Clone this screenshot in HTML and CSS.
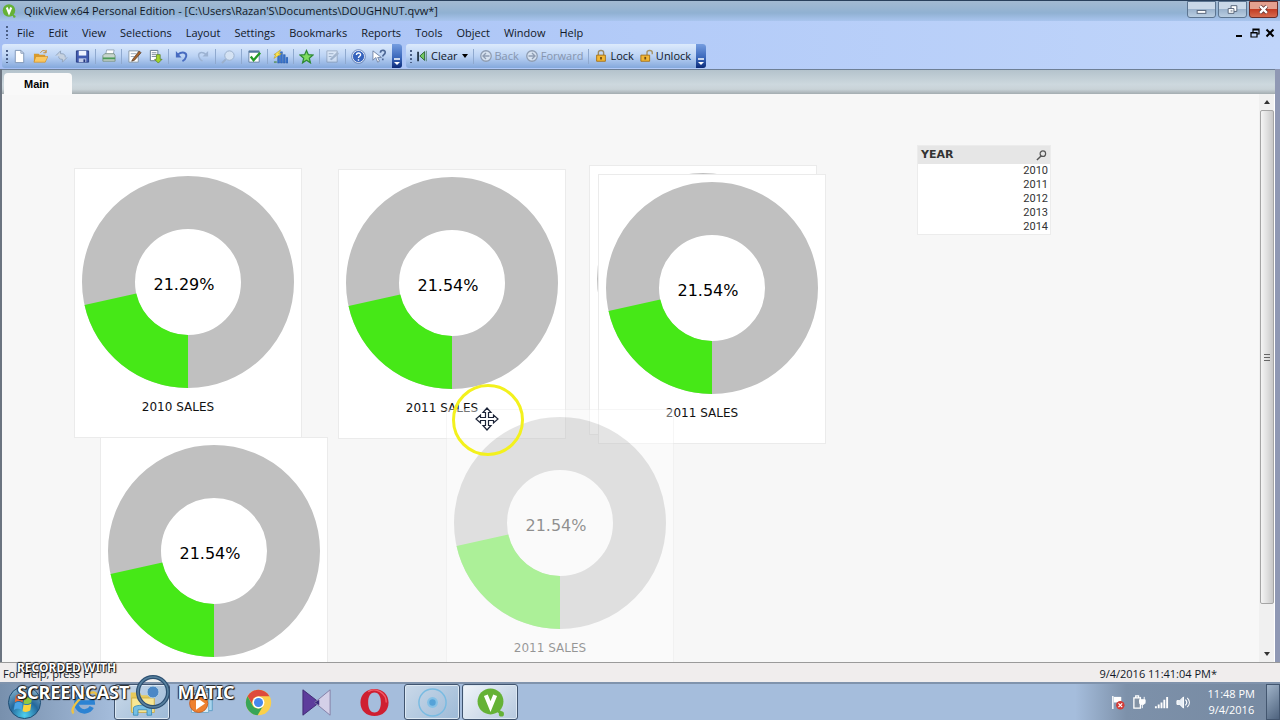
FILE: index.html
```html
<!DOCTYPE html>
<html lang="en">
<head>
<meta charset="utf-8">
<title>QlikView x64 Personal Edition</title>
<link rel="stylesheet" href="styles.css">
</head>
<body>
<svg class="defs" aria-hidden="true">
  <defs>
    <symbol id="donut" viewBox="0 0 212 212">
      <circle cx="106" cy="106" r="79.500" fill="none" stroke="#c0c0c0" stroke-width="53"/>
      <path d="M106 212A106 106 0 0 1 2.500 129L54.300 117.500A53 53 0 0 0 106 159Z" fill="#46e817"/>
    </symbol>
    <symbol id="edit" viewBox="0 0 16 16"><path d="M2 2h10v12H2z" fill="#fff" stroke="#8899a8"/><path d="M4 5h6M4 8h4" stroke="#9ab"/><path d="M6 11l7-9 2 2-7 8-3 1z" fill="#a8642c" stroke="#473322" stroke-width=".7"/></symbol>
    <symbol id="qlik" viewBox="0 0 28 28"><circle cx="14" cy="13" r="12.500" fill="#65b236"/><circle cx="24.500" cy="25" r="2.500" fill="#65b236"/><path d="M19 20l5 4" stroke="#65b236" stroke-width="3"/><path d="M9.500 7l4.500 11 4.500-11" fill="none" stroke="#fff" stroke-width="4"/></symbol>
  </defs>
</svg>

<header class="titlebar">
  <svg class="app-icon" viewBox="0 0 28 28"><use href="#qlik"/></svg>
  <h1 class="title">QlikView x64 Personal Edition - [C:\Users\Razan'S\Documents\DOUGHNUT.qvw*]</h1>
  <div class="window-buttons">
    <button class="wb" aria-label="Minimize"><svg viewBox="0 0 28 15"><rect x="9.500" y="8.500" width="9" height="3" fill="#fff" stroke="#56657a"/></svg></button>
    <button class="wb" aria-label="Restore"><svg viewBox="0 0 28 15"><path d="M12.500 3.500h6v6h-6z" fill="#fff" stroke="#56657a"/><path d="M9.500 6.500h6v5h-6z" fill="#fff" stroke="#56657a"/><path d="M12 9h2" stroke="#56657a"/></svg></button>
    <button class="wb wb-close" aria-label="Close"><svg viewBox="0 0 28 15"><path d="M10.500 4l7 7M17.500 4l-7 7" stroke="#5b3030" stroke-width="4"/><path d="M10.500 4l7 7M17.500 4l-7 7" stroke="#fff" stroke-width="2.400"/></svg></button>
  </div>
</header>

<nav class="menubar">
  <span class="grip"></span>
  <div class="menus">
    <button>File</button><button>Edit</button><button>View</button><button>Selections</button><button>Layout</button><button>Settings</button><button>Bookmarks</button><button>Reports</button><button>Tools</button><button>Object</button><button>Window</button><button>Help</button>
  </div>
  <div class="doc-buttons">
    <button aria-label="Minimize document"><svg viewBox="0 0 10 10"><path d="M1 8h6" stroke="#000" stroke-width="2"/></svg></button>
    <button aria-label="Restore document"><svg viewBox="0 0 10 10"><path d="M3 4V1h6v5H7M3 2h6M1 4.500h6V9H1zM1 5h6" fill="none" stroke="#000" stroke-width="1.200"/></svg></button>
    <button aria-label="Close document"><svg viewBox="0 0 10 10"><path d="M1.500 1.500l7 7M8.500 1.500l-7 7" stroke="#000" stroke-width="2"/></svg></button>
  </div>
</nav>

<div class="toolbars">
  <div class="toolbar">
    <span class="grip"></span>
    <button class="tool" aria-label="New"><svg viewBox="0 0 16 16"><path d="M3.500 1.500h6l3 3v10h-9z" fill="#fff" stroke="#7f96b6"/><path d="M9.500 1.500v3h3" fill="none" stroke="#7f96b6"/></svg></button>
    <button class="tool" aria-label="Open"><svg viewBox="0 0 16 16"><path d="M1 5h5l1 1h6v8H1z" fill="#d89a2c"/><path d="M3 8h13l-3 6H1z" fill="#fbc860" stroke="#c78724" stroke-width=".6"/><path d="M8 4c2-3 4-3 6-1M14 1v3h-3" fill="none" stroke="#c78724"/></svg></button>
    <button class="tool" aria-label="Refresh"><svg viewBox="0 0 16 16"><path d="M2 7l5-5v3c4 0 5 1 5 4M14 9l-5 5v-3c-3 0-4-1-4-3" fill="#c7d2e0" stroke="#8fa2bb"/></svg></button>
    <button class="tool" aria-label="Save"><svg viewBox="0 0 16 16"><path d="M1.500 2h13v12h-13z" fill="#415bb0" stroke="#293c82"/><path d="M4 2h8v5H4z" fill="#eef3ff"/><path d="M4 10h8v4H4z" fill="#c3cdea"/><path d="M9 11h2v3H9z" fill="#26397f"/></svg></button>
    <span class="sep"></span>
    <button class="tool" aria-label="Print"><svg viewBox="0 0 16 16"><path d="M5 6l1-5h8l-1 5z" fill="#fff" stroke="#9ab"/><path d="M2 7l2-2h10l1 2v6H2z" fill="#c7d5cd" stroke="#7c9486"/><path d="M2 10h13" stroke="#4c9a58" stroke-width="2"/></svg></button>
    <span class="sep"></span>
    <button class="tool" aria-label="Edit script"><svg viewBox="0 0 16 16"><use href="#edit"/></svg></button>
    <button class="tool" aria-label="Reload"><svg viewBox="0 0 16 16"><path d="M2.500 1.500h8v11h-8z" fill="#fff" stroke="#60778c"/><path d="M4 4h5M4 6h5M4 8h5" stroke="#789"/><path d="M9 6h4v5h2l-4 4-4-4h2z" fill="#a3d52d" stroke="#4d7716" stroke-width=".7"/></svg></button>
    <span class="sep"></span>
    <button class="tool" aria-label="Undo"><svg viewBox="0 0 16 16"><path d="M4 6c5-4 10-2 9 2-.5 2-2 4-4 5" fill="none" stroke="#476bc0" stroke-width="2"/><path d="M2 2v7h6z" fill="#476bc0"/></svg></button>
    <button class="tool" aria-label="Redo"><svg viewBox="0 0 16 16"><path d="M12 6C7 2 3 4 4 8c.5 2 2 4 4 5" fill="none" stroke="#9cb2d2" stroke-width="1.500"/><path d="M14 2v6H8z" fill="#9cb2d2"/></svg></button>
    <span class="sep"></span>
    <button class="tool" aria-label="Search"><svg viewBox="0 0 16 16"><circle cx="9" cy="7" r="5" fill="#d4e2f3" stroke="#9aafcb"/><path d="M5 11l-4 4" stroke="#9aafcb" stroke-width="2"/></svg></button>
    <span class="sep"></span>
    <button class="tool" aria-label="Current selections"><svg viewBox="0 0 16 16"><path d="M2 2h11v12H2z" fill="#fff" stroke="#6682a4"/><path d="M2 3h11" stroke="#54789f" stroke-width="2"/><path d="M4 8l3 4 7-8" fill="none" stroke="#259b28" stroke-width="2.500"/></svg></button>
    <span class="sep"></span>
    <button class="tool" aria-label="Quick chart"><svg viewBox="0 0 16 16"><path d="M5 7h2v8H5zM8 3h2v12H8zM11 6h2v9h-2zM14 9h2v6h-2z" fill="#3675d1" stroke="#23529b" stroke-width=".5"/><path d="M1 6l7-5-2 4h3l-8 5 2-4z" fill="#ffe64d" stroke="#b69a22" stroke-width=".6"/><path d="M1 13h3v2H1z" fill="#697"/></svg></button>
    <span class="sep"></span>
    <button class="tool" aria-label="Add bookmark"><svg viewBox="0 0 16 16"><path d="M8 1.500l2 4.500 5 .5-4 3.300 1.200 5L8 12l-4.200 2.800 1.200-5L1 6.500 6 6z" fill="#7fdc5f" stroke="#2f8a35" stroke-width="1.300"/></svg></button>
    <span class="sep"></span>
    <button class="tool faded" aria-label="Edit module"><svg viewBox="0 0 16 16"><path d="M2 2h11v12H2z" fill="#edf2f7" stroke="#748397"/><path d="M5 11l8-8 2 2-8 7z" fill="#8997a9"/><path d="M4 5h5M4 8h3" stroke="#748397"/></svg></button>
    <span class="sep"></span>
    <button class="tool" aria-label="Help topics"><svg viewBox="0 0 16 16"><circle cx="8" cy="8" r="6.500" fill="#3563bd" stroke="#fff"/><circle cx="8" cy="8" r="7.300" fill="none" stroke="#4967a2" stroke-width=".7"/><path d="M5.800 6.300c0-3 4.700-2.500 4.400 0C10 8 8 7.500 8 9.500M8 11v1.500" fill="none" stroke="#fff" stroke-width="1.500"/></svg></button>
    <button class="tool" aria-label="Context help"><svg viewBox="0 0 16 16"><path d="M1 2v10l3-3 2 5 2-1-2-4h4z" fill="#fff" stroke="#5b6f91" stroke-width=".8"/><path d="M9 4c0-4 6-3 5 0-.4 2-2.500 2-2.500 4M11.500 10v2" fill="none" stroke="#4d6897" stroke-width="1.800"/></svg></button>
    <button class="overflow" aria-label="Toolbar options"><svg viewBox="0 0 10 8"><path d="M2 1h6" stroke="#fff" stroke-width="1.500"/><path d="M2 4h6L5 7z" fill="#fff"/></svg></button>
  </div>
  <div class="toolbar">
    <span class="grip"></span>
    <button class="labelled"><svg viewBox="0 0 16 16"><path d="M3.500 3v11" stroke="#234" stroke-width="2"/><path d="M11 3v10L5.500 8z" fill="#72c963" stroke="#235b2b"/><path d="M13 2v12" stroke="#587" /></svg>Clear<svg class="caret" viewBox="0 0 6 4"><path d="M0 0h6L3 4z"/></svg></button>
    <span class="sep"></span>
    <button class="labelled disabled"><svg viewBox="0 0 16 16"><circle cx="8" cy="8" r="6" fill="#d8e3f0" stroke="#8f9db2" stroke-width="1.500"/><path d="M12 8H5M8 4.500L4.500 8 8 11.500" fill="none" stroke="#8f9db2" stroke-width="1.500"/></svg>Back</button>
    <button class="labelled disabled"><svg viewBox="0 0 16 16"><circle cx="8" cy="8" r="6" fill="#d8e3f0" stroke="#8f9db2" stroke-width="1.500"/><path d="M4 8h7M8 4.500L11.500 8 8 11.500" fill="none" stroke="#8f9db2" stroke-width="1.500"/></svg>Forward</button>
    <span class="sep"></span>
    <button class="labelled"><svg viewBox="0 0 16 16"><path d="M5 7V4c0-3 6-3 6 0v3" fill="none" stroke="#9b8c68" stroke-width="1.600"/><path d="M3 7h10v7H3z" fill="#f3b734" stroke="#a36e12"/><path d="M8 9v3" stroke="#6e4a11" stroke-width="2"/></svg>Lock</button>
    <button class="labelled"><svg viewBox="0 0 16 16"><path d="M8 7V4c0-3 6-3 6 0v2" fill="none" stroke="#a79466" stroke-width="1.600"/><path d="M1 7h10v7H1z" fill="#f3b734" stroke="#a36e12"/><path d="M6 9v3" stroke="#6e4a11" stroke-width="2"/></svg>Unlock</button>
    <button class="overflow" aria-label="Toolbar options"><svg viewBox="0 0 10 8"><path d="M2 1h6" stroke="#fff" stroke-width="1.500"/><path d="M2 4h6L5 7z" fill="#fff"/></svg></button>
  </div>
</div>

<main class="document">
  <div class="tabs"><button class="tab">Main</button></div>
  <div class="sheet-row">
    <section class="sheet">
      <article class="chart chart-back"><svg class="donut"><use href="#donut"/></svg></article>
      <article class="chart chart-a"><svg class="donut"><use href="#donut"/></svg><div class="value">21.29%</div><div class="caption">2010 SALES</div></article>
      <article class="chart chart-b"><svg class="donut"><use href="#donut"/></svg><div class="value">21.54%</div><div class="caption">2011 SALES</div></article>
      <article class="chart chart-c"><svg class="donut"><use href="#donut"/></svg><div class="value">21.54%</div><div class="caption">2011 SALES</div></article>
      <article class="chart chart-d"><svg class="donut"><use href="#donut"/></svg><div class="value">21.54%</div></article>
      <article class="chart chart-drag"><svg class="donut"><use href="#donut"/></svg><div class="value">21.54%</div><div class="caption">2011 SALES</div></article>
      <div class="listbox">
        <div class="listbox-head"><h2>YEAR</h2><svg viewBox="0 0 12 12"><circle cx="7.500" cy="4" r="3" fill="none" stroke="#555" stroke-width="1.300"/><path d="M5.500 6.500L1 11" stroke="#555" stroke-width="1.600"/></svg></div>
        <ul><li>2010</li><li>2011</li><li>2012</li><li>2013</li><li>2014</li></ul>
      </div>
      <div class="pointer"><svg viewBox="0 0 24 24"><path d="M12 1l4 4.500h-2.500v5h5V8l4.500 4-4.500 4v-2.500h-5v5H16L12 23l-4-4.500h2.500v-5h-5V16L1 12l4.500-4v2.500h5v-5H8z" fill="#fff" stroke="#1c2438" stroke-width="1.200"/></svg></div>
    </section>
    <div class="scrollbar">
      <svg class="arrow" viewBox="0 0 6 4"><path d="M0 4h6L3 0z" fill="#333"/></svg>
      <div class="thumb"><span></span></div>
      <svg class="arrow" viewBox="0 0 6 4"><path d="M0 0h6L3 4z" fill="#333"/></svg>
    </div>
  </div>
</main>

<footer class="statusbar"><span>For Help, press F1</span><span class="stamp">9/4/2016 11:41:04 PM*</span></footer>

<div class="taskbar">
  <button class="start" aria-label="Start"><svg viewBox="0 0 36 36"><defs><radialGradient id="orb" cx=".5" cy=".9" r=".9"><stop offset="0" stop-color="#4fd0ef"/><stop offset=".5" stop-color="#24689c"/><stop offset="1" stop-color="#8cb5cd"/></radialGradient></defs><circle cx="18" cy="18" r="16.500" fill="url(#orb)" stroke="#1c4b72"/><path d="M9 11c3-2 5-2 8 0l-1 7c-3-2-5-2-8 0z" fill="#ea6b35"/><path d="M18 12c3 1 5 1 8-1l-1 7c-3 2-5 2-8 1z" fill="#91c943"/><path d="M8 19c3-2 5-2 8 0l-1 7c-3-2-5-2-8 0z" fill="#4aa4e5"/><path d="M17 20c3 1 5 1 8-1l-1 7c-3 2-5 2-8 1z" fill="#fbd23c"/></svg></button>
  <div class="apps">
    <button class="app" aria-label="Internet Explorer"><svg viewBox="0 0 32 32"><path d="M24 21a9 9 0 1 1 1-5H9" fill="none" stroke="#2c83d3" stroke-width="5"/><path d="M4 28C-2 23 15 4 27 5c3 1 2 5 0 7" fill="none" stroke="#edc344" stroke-width="2.500"/></svg></button>
    <button class="app open" aria-label="Windows Explorer"><svg viewBox="0 0 32 32"><path d="M3 5h10l2 3h14v18H3z" fill="#e7c959"/><path d="M4 11h25v16H4z" fill="#f8e794" stroke="#c9ab4a"/><path d="M6 30v-8c0-4 20-4 20 0v8h-5v-6H11v6z" fill="#75bfe4" stroke="#3d8fbd"/></svg></button>
    <button class="app" aria-label="Media Player"><svg viewBox="0 0 32 32"><path d="M9 3h20v22H9z" fill="#a7d4ed" stroke="#5b9cc3"/><path d="M6 5h19v22H6z" fill="#d8edf7" stroke="#6fa9c9"/><circle cx="14" cy="17" r="10" fill="#ee812f" stroke="#c75a1f"/><path d="M11 10l10 7-10 7z" fill="#fff"/></svg></button>
    <button class="app" aria-label="Chrome"><svg viewBox="0 0 32 32"><circle cx="16" cy="16" r="14" fill="#fbd04b"/><path d="M3.900 9A14 14 0 0 1 28.100 9H16a7 7 0 0 0-6.500 9.500z" fill="#dd4a3c"/><path d="M3.900 9A14 14 0 0 0 15 30l6.500-11a7 7 0 0 1-11.500 1z" fill="#38a558"/><circle cx="16" cy="16" r="6.500" fill="#fff"/><circle cx="16" cy="16" r="5" fill="#4688ec"/></svg></button>
    <button class="app" aria-label="KMPlayer"><svg viewBox="0 0 32 32"><path d="M1 2l18 14L1 30z" fill="#5d3c9c" stroke="#3e2870"/><path d="M31 2L14 16l17 14z" fill="#d4d0e8" stroke="#807ba3"/><path d="M14 16l5-3v6z" fill="#3c2b7c"/></svg></button>
    <button class="app" aria-label="Opera"><svg viewBox="0 0 32 32"><path fill-rule="evenodd" d="M16 1c9 0 15.500 6 15.500 15S25 31 16 31 .5 25 .5 16 7 1 16 1zm0 4c-5 0-7 5-7 11s2 11 7 11 7-5 7-11-2-11-7-11z" fill="#cf1f31"/><path d="M9 4c8-5 20 1 20 12" fill="none" stroke="#f25c67" stroke-width="1.500"/></svg></button>
    <button class="app open" aria-label="Screen recorder"><svg viewBox="0 0 32 32"><circle cx="16" cy="16" r="15" fill="none" stroke="#78bbe2" stroke-width="1.600"/><circle cx="16" cy="16" r="6" fill="#85c1e6"/><circle cx="16" cy="16" r="3.500" fill="#55a2d8"/></svg></button>
    <button class="app open active" aria-label="QlikView"><svg viewBox="0 0 28 28"><use href="#qlik"/></svg></button>
  </div>
  <div class="tray">
    <svg viewBox="0 0 16 16"><path d="M3 1v14" stroke="#fff" stroke-width="1.500"/><path d="M4 2h8v6H4z" fill="#fff"/><circle cx="11" cy="11" r="4.500" fill="#d33b36"/><path d="M9 9l4 4M13 9l-4 4" stroke="#fff" stroke-width="1.300"/></svg>
    <svg viewBox="0 0 16 16"><path d="M2 3h7v11H2zM4 1h3v2H4z" fill="#8493a5" stroke="#fff" stroke-width="1.400"/><path d="M9 2v3M13 2v3M8 5h6v3c0 3-6 3-6 0zM11 10v4" fill="#fff" stroke="#fff"/></svg>
    <svg viewBox="0 0 16 16"><path d="M1 12h2v2H1zM4 10h2v4H4zM7 8h2v6H7zM10 5h2v9h-2zM13 2h2v12h-2z" fill="#fff"/></svg>
    <svg viewBox="0 0 16 16"><path d="M1 6h3l4-4v12l-4-4H1z" fill="#e6edf5" stroke="#fff"/><path d="M10 5c2 2 2 4 0 6M12 3c3 3 3 7 0 10" fill="none" stroke="#fff" stroke-width="1.200"/></svg>
  </div>
  <div class="clock"><span>11:48 PM</span><span>9/4/2016</span></div>
  <button class="show-desktop" aria-label="Show desktop"></button>
</div>

<div class="watermark">
  <div class="wm-small">RECORDED WITH</div>
  <div class="wm-big"><span>SCREENCAST</span><svg viewBox="0 0 36 36"><circle cx="18" cy="18" r="15" fill="none" stroke="#2d5072" stroke-width="4"/><circle cx="18" cy="18" r="15" fill="none" stroke="#58819f" stroke-width="1.500"/><circle cx="18" cy="18" r="6" fill="#4b88c6" stroke="#b4d2e7"/></svg><span>MATIC</span></div>
</div>
</body>
</html>
```

FILE: styles.css
```css
* { box-sizing: border-box; }
body {
  margin: 0;
  height: 100vh;
  display: flex;
  flex-direction: column;
  overflow: hidden;
  position: relative;
  background: #b9cff6;
  color: #111827;
  font: 11px/16px "Open Sans", "Noto Sans", sans-serif;
}
button {
  border: 0;
  padding: 0;
  background: none;
  color: inherit;
  font: inherit;
}
svg { display: block; flex: none; }
h1, h2, ul { margin: 0; padding: 0; }
.defs { position: absolute; width: 0; height: 0; }

.titlebar {
  display: flex;
  align-items: center;
  height: 21px;
  padding: 0 2px 0 2px;
  gap: 8px;
  border-top: 1px solid #29405c;
  background: linear-gradient(#a3bad2, #90b1d2 60%, #a9c5ee);
}
.app-icon { width: 14px; height: 14px; }
.title { flex: 1; font-size: 11px; font-weight: 400; }
.window-buttons { display: flex; gap: 2px; align-self: flex-start; }
.wb {
  width: 29px;
  height: 17px;
  border: 1px solid #5c7591;
  border-radius: 0 0 3px 3px;
  background: linear-gradient(#c9d8e8 45%, #9bb3cd 50%, #b9cde1);
}
.wb svg { width: 27px; height: 15px; }
.wb-close { border-color: #6a2c28; background: linear-gradient(#e3a08f 45%, #c33d24 50%, #d66a4e); }

.grip {
  flex: none;
  width: 2px;
  height: 13px;
  background: repeating-linear-gradient(#4b5f86 0 2px, transparent 2px 4px);
}
.menubar {
  display: flex;
  align-items: center;
  height: 23px;
  padding: 0 5px 0 6px;
  background: linear-gradient(90deg, #a4bef3, #b3cbf8 50%, #c0d5fa);
}
.menus { display: flex; flex: 1; gap: 14px; padding-left: 9px; }
.doc-buttons { display: flex; gap: 5px; }
.doc-buttons svg { width: 10px; height: 10px; }

.toolbars {
  display: flex;
  gap: 4px;
  height: 25px;
  padding: 0 2px;
  background: linear-gradient(90deg, #a4bef3, #b3cbf8 50%, #c0d5fa);
}
.toolbar {
  display: flex;
  align-items: center;
  height: 24px;
  padding-left: 4px;
  border-radius: 3px;
  background: linear-gradient(#dceafc, #bcd3f4 50%, #84a8dc);
}
.tool { width: 21px; height: 20px; display: grid; place-items: center; }
.toolbar .grip + .tool { margin-left: 1px; }
.tool svg { width: 15px; height: 15px; }
.faded { opacity: 0.5; }
.sep { width: 1px; height: 15px; margin: 0 2px; background: #8fa9cf; }
.overflow {
  width: 10px;
  height: 24px;
  margin-left: 2px;
  display: flex;
  align-items: flex-end;
  padding-bottom: 2px;
  border-radius: 0 3px 3px 0;
  background: linear-gradient(#759de0, #3764b8 60%, #0b2a78);
}
.overflow svg { width: 10px; height: 8px; }
.labelled { display: flex; align-items: center; gap: 2px; padding: 0 3px; }
.labelled svg { width: 14px; height: 14px; }
.labelled .caret { width: 6px; height: 4px; margin-left: 2px; }
.disabled { color: #8795ae; }

.document {
  flex: 1;
  min-height: 0;
  display: flex;
  flex-direction: column;
  border-left: 2px solid #6b7480;
  border-right: 5px solid #8f98b4;
  background: #f7f7f7;
}
.tabs {
  height: 25px;
  padding: 3px 2px 0;
  border-top: 1px solid #6e7f95;
  background: linear-gradient(#b4c3cc, #cdd8de 60%, #c9d3d8 80%, #a3acb0);
}
.tab {
  height: 22px;
  padding: 0 23px 0 20px;
  border-radius: 4px 4px 0 0;
  background: #f9f9f9;
  color: #000;
  font: bold 11px/20px "Liberation Sans", Arial, sans-serif;
}
.sheet-row { flex: 1; min-height: 0; display: flex; }
.sheet { flex: 1; position: relative; overflow: hidden; }

.chart {
  position: absolute;
  width: 228px;
  height: 270px;
  padding: 7px;
  border: 1px solid #ebebeb;
  background: #fff;
  color: #111;
  font-family: "DejaVu Sans", sans-serif;
  text-align: center;
}
.donut { width: 212px; height: 212px; }
.value {
  position: absolute;
  top: 105px;
  left: 0;
  width: 218px;
  font-size: 16px;
  line-height: 22px;
  color: #000;
}
.caption { padding: 11px 20px 0 0; font-size: 12px; }
.chart-a { left: 72px; top: 74px; }
.chart-b { left: 336px; top: 75px; }
.chart-back { left: 587px; top: 71px; }
.chart-c { left: 596px; top: 80px; }
.chart-d { left: 98px; top: 343px; }
.chart-drag { left: 444px; top: 315px; opacity: 0.42; }

.listbox {
  position: absolute;
  left: 915px;
  top: 51px;
  width: 134px;
  border: 1px solid #ececec;
  background: #fff;
  color: #333;
  font-family: Roboto, sans-serif;
}
.listbox-head {
  display: flex;
  align-items: center;
  justify-content: space-between;
  height: 18px;
  padding: 0 3px;
  background: #e6e6e6;
}
.listbox-head h2 { font: bold 11px/16px "DejaVu Sans", sans-serif; }
.listbox-head svg { width: 11px; height: 11px; }
.listbox ul { list-style: none; padding-right: 2px; text-align: right; }
.listbox li { font-size: 11px; line-height: 14px; }

.pointer {
  position: absolute;
  left: 450px;
  top: 290px;
  width: 72px;
  height: 72px;
  padding: 20px 0 0 20px;
  border: 3px solid #f3f11d;
  border-radius: 50%;
}
.pointer svg { width: 24px; height: 24px; }

.scrollbar {
  width: 16px;
  display: flex;
  flex-direction: column;
  align-items: center;
  gap: 6px;
  padding: 6px 0;
  border-right: 1px solid #fff;
  background: #f0f0f0;
}
.arrow { width: 6px; height: 4px; }
.thumb {
  width: 14px;
  flex: 1;
  display: grid;
  place-items: center;
  margin-bottom: 42px;
  border: 1px solid #a5a5a5;
  border-radius: 2px;
  background: linear-gradient(90deg, #f4f4f4, #e0e0e0 50%, #c8c8c8);
}
.thumb span { width: 6px; height: 7px; background: repeating-linear-gradient(#666 0 1px, transparent 1px 3px); }

.statusbar {
  display: flex;
  justify-content: space-between;
  height: 20px;
  padding: 3px 63px 0 3px;
  border-top: 1px solid #9a9a9a;
  background: #f0eded;
}

.taskbar {
  display: flex;
  align-items: center;
  height: 38px;
  border-top: 2px solid #8093ac;
  color: #fff;
  background: linear-gradient(90deg, #7890ad, #a5bddc 9%, #a5bddc 84%, #7d91aa 88%, #7689a1);
}
.start { width: 56px; height: 36px; padding-left: 7px; }
.start svg { width: 35px; height: 35px; }
.apps { display: flex; gap: 2px; flex: 1; }
.app { width: 56px; height: 36px; display: grid; place-items: center; border: 1px solid transparent; border-radius: 3px; }
.app svg { width: 29px; height: 29px; }
.open { border-color: #40546f; background: linear-gradient(135deg, #cad9e9, #9dbad7); box-shadow: inset 0 0 0 1px #dce8f3; }
.active { background: linear-gradient(135deg, #f1f5f9, #b5c9df); }
.tray { display: flex; gap: 7px; }
.tray svg { width: 15px; height: 15px; }
.clock { display: flex; flex-direction: column; align-items: center; margin: 0 11px 0 17px; }
.show-desktop { width: 14px; height: 36px; border: 1px solid #43566f; background: linear-gradient(135deg, #a0b3c8, #4e637e); }

.watermark {
  position: absolute;
  left: 17px;
  bottom: 10px;
  color: #fff;
  font-family: "Noto Sans", sans-serif;
  font-weight: 700;
  text-shadow: 1px 1px 1px #000, -1px 0 1px #222, 0 -1px 1px #222;
}
.wm-small { font-size: 12px; line-height: 12px; }
.wm-big { display: flex; align-items: center; gap: 6px; height: 36px; font-size: 18px; }
.wm-big svg { width: 36px; height: 36px; }
```
